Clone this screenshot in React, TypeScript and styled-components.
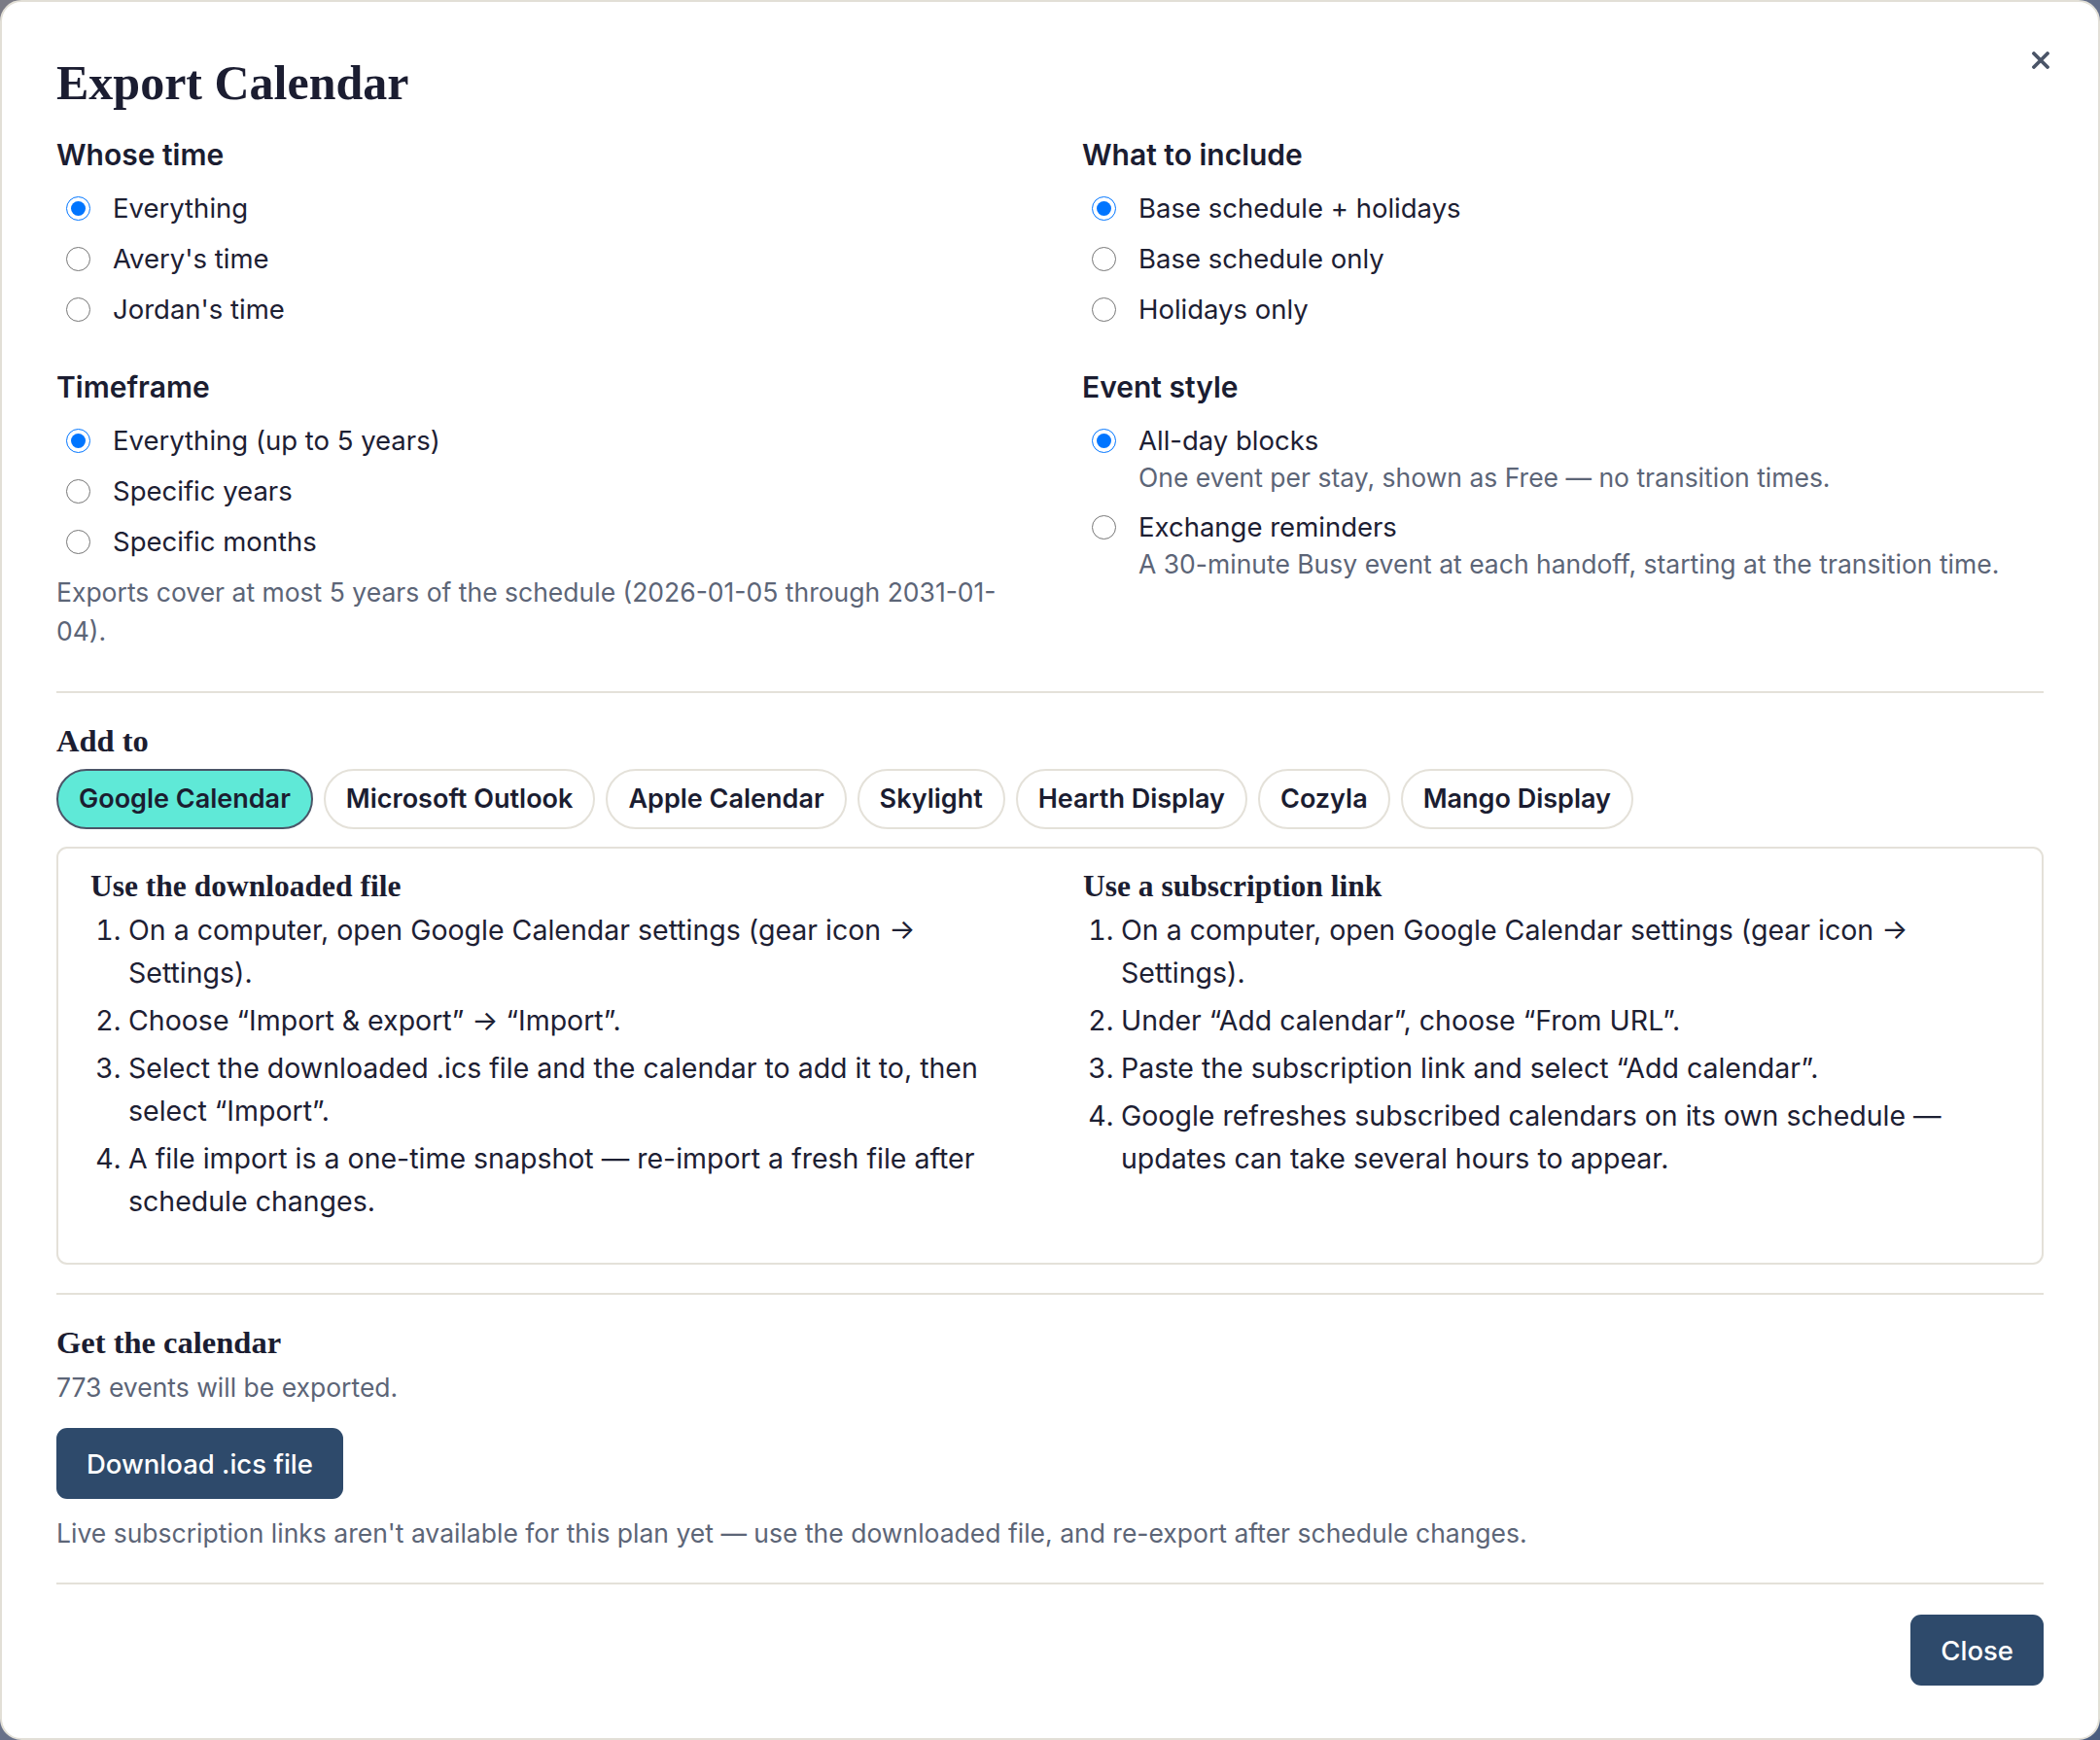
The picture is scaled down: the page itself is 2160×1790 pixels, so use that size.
import React from 'react';
import styled, { createGlobalStyle } from 'styled-components';

const GlobalStyle = createGlobalStyle`
  html, body {
    margin: 0;
    padding: 0;
  }
  body {
    background: linear-gradient(135deg, #7b7b85 0%, #66708a 50%, #4b5d7f 100%);
    font-family: Inter, "Noto Sans", sans-serif;
    color: #1d2033;
  }
`;

const Modal = styled.div`
  position: relative;
  box-sizing: border-box;
  width: 2160px;
  height: 1790px;
  background: #ffffff;
  border: 2px solid #e2dfd6;
  border-radius: 22px;
  padding: 53px 56px 0 56px;
  display: flex;
  flex-direction: column;
`;

const CloseX = styled.button`
  position: absolute;
  top: 42px;
  right: 41px;
  width: 36px;
  height: 36px;
  padding: 0;
  border: 0;
  background: transparent;
  display: flex;
  align-items: center;
  justify-content: center;
  cursor: pointer;
`;

const Title = styled.h1`
  margin: 0;
  font-family: "Liberation Serif", "Times New Roman", serif;
  font-weight: 700;
  font-size: 50px;
  line-height: 60px;
  color: #1b1d31;
`;

const TopGrid = styled.div`
  display: grid;
  grid-template-columns: 988px 988px;
  column-gap: 67px;
  margin-top: 26px;
`;

const Column = styled.div`
  display: flex;
  flex-direction: column;
`;

const Group = styled.div<{ $spaced?: boolean }>`
  display: flex;
  flex-direction: column;
  margin-top: ${(p) => (p.$spaced ? '40px' : '0')};
`;

const GroupLabel = styled.div`
  font-size: 30px;
  font-weight: 600;
  line-height: 36px;
  color: #1b1d31;
`;

const Options = styled.div`
  display: flex;
  flex-direction: column;
  gap: 8px;
  margin-top: 15px;
`;

const Option = styled.div`
  display: flex;
  flex-direction: column;
`;

const OptionRow = styled.label`
  display: flex;
  align-items: center;
  gap: 23px;
  height: 44px;
  font-size: 27.5px;
  line-height: 44px;
  color: #1d2033;
`;

const Radio = styled.input`
  width: 25px;
  height: 25px;
  margin: 0 0 0 10px;
  flex-shrink: 0;
`;

const OptionHint = styled.div`
  padding-left: 58px;
  margin-bottom: 4px;
  font-size: 26.5px;
  line-height: 33px;
  color: #5c6577;
`;

const Muted = styled.p<{ $top: number; $lh: number }>`
  margin: ${(p) => p.$top}px 0 0 0;
  font-size: 26.5px;
  line-height: ${(p) => p.$lh}px;
  color: #5c6577;
`;

const Divider = styled.hr<{ $top: number }>`
  margin: ${(p) => p.$top}px 0 0 0;
  border: 0;
  height: 2px;
  background: #e4e1d9;
  flex-shrink: 0;
`;

const SerifHeading = styled.h2`
  margin: 30px 0 0 0;
  font-family: "Liberation Serif", "Times New Roman", serif;
  font-weight: 700;
  font-size: 32.5px;
  line-height: 38px;
  color: #1b1d31;
`;

const PillRow = styled.div`
  display: flex;
  gap: 11px;
  margin-top: 10px;
`;

const Pill = styled.button<{ $active?: boolean }>`
  font-family: Inter, "Noto Sans", sans-serif;
  font-size: 27px;
  font-weight: 600;
  line-height: 34px;
  padding: 12px 21px;
  border-radius: 999px;
  border: 2px solid ${(p) => (p.$active ? '#4b5568' : '#e4e1d9')};
  background: ${(p) => (p.$active ? '#5fe9d7' : '#ffffff')};
  color: #1b1d31;
  cursor: pointer;
`;

const GuideBox = styled.div`
  margin-top: 18px;
  border: 2px solid #e4e1d9;
  border-radius: 11px;
  padding: 21px 33px 41px 33px;
  display: grid;
  grid-template-columns: 952px 952px;
  column-gap: 69px;
`;

const GuideHeading = styled.h3`
  margin: 0;
  font-family: "Liberation Serif", "Times New Roman", serif;
  font-weight: 700;
  font-size: 31.5px;
  line-height: 36px;
  color: #1b1d31;
`;

const Steps = styled.ol`
  margin: 5px 0 0 0;
  padding-left: 39px;
  font-size: 28.5px;
  line-height: 44px;
  color: #1d2033;

  li + li {
    margin-top: 5px;
  }
`;

const PrimaryButton = styled.button<{ $top?: number }>`
  align-self: flex-start;
  margin-top: ${(p) => p.$top ?? 0}px;
  height: 73px;
  padding: 0 31px;
  border: 0;
  border-radius: 11px;
  background: #2e4a6b;
  color: #ffffff;
  font-family: Inter, "Noto Sans", sans-serif;
  font-size: 27.5px;
  font-weight: 500;
  cursor: pointer;
`;

const Footer = styled.div`
  display: flex;
  justify-content: flex-end;
  margin-top: 31px;
`;

type Choice = { label: string; hint?: string; checked?: boolean };

function RadioGroup({ name, title, choices, spaced }: { name: string; title: string; choices: Choice[]; spaced?: boolean }) {
  return (
    <Group $spaced={spaced}>
      <GroupLabel>{title}</GroupLabel>
      <Options>
        {choices.map((c) => (
          <Option key={c.label}>
            <OptionRow>
              <Radio type="radio" name={name} defaultChecked={c.checked} />
              {c.label}
            </OptionRow>
            {c.hint && <OptionHint>{c.hint}</OptionHint>}
          </Option>
        ))}
      </Options>
    </Group>
  );
}

const targets = [
  'Google Calendar',
  'Microsoft Outlook',
  'Apple Calendar',
  'Skylight',
  'Hearth Display',
  'Cozyla',
  'Mango Display',
];

const fileSteps = [
  'On a computer, open Google Calendar settings (gear icon → Settings).',
  'Choose “Import & export” → “Import”.',
  'Select the downloaded .ics file and the calendar to add it to, then select “Import”.',
  'A file import is a one-time snapshot — re-import a fresh file after schedule changes.',
];

const linkSteps = [
  'On a computer, open Google Calendar settings (gear icon → Settings).',
  'Under “Add calendar”, choose “From URL”.',
  'Paste the subscription link and select “Add calendar”.',
  'Google refreshes subscribed calendars on its own schedule — updates can take several hours to appear.',
];

export default function App() {
  return (
    <>
      <GlobalStyle />
      <Modal>
        <CloseX aria-label="Close">
          <svg width="18" height="18" viewBox="0 0 18 18">
            <path d="M2 2 L16 16 M16 2 L2 16" stroke="#4b5568" strokeWidth="3.8" strokeLinecap="round" />
          </svg>
        </CloseX>
        <Title>Export Calendar</Title>

        <TopGrid>
          <Column>
            <RadioGroup
              name="whose"
              title="Whose time"
              choices={[{ label: 'Everything', checked: true }, { label: "Avery's time" }, { label: "Jordan's time" }]}
            />
            <RadioGroup
              spaced
              name="timeframe"
              title="Timeframe"
              choices={[{ label: 'Everything (up to 5 years)', checked: true }, { label: 'Specific years' }, { label: 'Specific months' }]}
            />
            <Muted $top={10} $lh={40}>
              Exports cover at most 5 years of the schedule (2026-01-05 through 2031-01-04).
            </Muted>
          </Column>
          <Column>
            <RadioGroup
              name="include"
              title="What to include"
              choices={[{ label: 'Base schedule + holidays', checked: true }, { label: 'Base schedule only' }, { label: 'Holidays only' }]}
            />
            <RadioGroup
              spaced
              name="style"
              title="Event style"
              choices={[
                { label: 'All-day blocks', checked: true, hint: 'One event per stay, shown as Free — no transition times.' },
                { label: 'Exchange reminders', hint: 'A 30-minute Busy event at each handoff, starting at the transition time.' },
              ]}
            />
          </Column>
        </TopGrid>

        <Divider $top={42} />
        <SerifHeading>Add to</SerifHeading>
        <PillRow>
          {targets.map((t, i) => (
            <Pill key={t} $active={i === 0}>
              {t}
            </Pill>
          ))}
        </PillRow>

        <GuideBox>
          <div>
            <GuideHeading>Use the downloaded file</GuideHeading>
            <Steps>
              {fileSteps.map((s) => (
                <li key={s}>{s}</li>
              ))}
            </Steps>
          </div>
          <div>
            <GuideHeading>Use a subscription link</GuideHeading>
            <Steps>
              {linkSteps.map((s) => (
                <li key={s}>{s}</li>
              ))}
            </Steps>
          </div>
        </GuideBox>

        <Divider $top={29} />
        <SerifHeading>Get the calendar</SerifHeading>
        <Muted $top={9} $lh={36}>773 events will be exported.</Muted>
        <PrimaryButton $top={24}>Download .ics file</PrimaryButton>
        <Muted $top={17} $lh={36}>
          Live subscription links aren't available for this plan yet — use the downloaded file, and re-export after schedule changes.
        </Muted>
        <Divider $top={33} />
        <Footer>
          <PrimaryButton>Close</PrimaryButton>
        </Footer>
      </Modal>
    </>
  );
}
